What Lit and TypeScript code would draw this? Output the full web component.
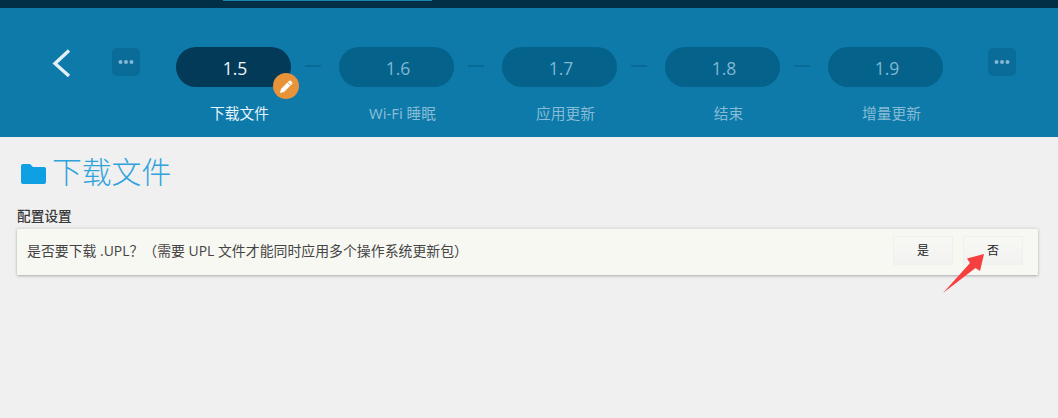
import { LitElement, html, css, svg } from "lit";
import { customElement } from "lit/decorators.js";

const steps = [
  { num: "1.5", label: "下载文件", active: true },
  { num: "1.6", label: "Wi-Fi 睡眠", active: false },
  { num: "1.7", label: "应用更新", active: false },
  { num: "1.8", label: "结束", active: false },
  { num: "1.9", label: "增量更新", active: false },
];

const dots = svg`<svg width="16" height="4" viewBox="0 0 16 4"><circle cx="2.5" cy="2" r="2" /><circle cx="8" cy="2" r="2" /><circle cx="13.5" cy="2" r="2" /></svg>`;

@customElement("app-root")
class AppRoot extends LitElement {
  static styles = css`
    :host {
      display: block;
      position: relative;
      height: 418px;
      overflow: hidden;
      background: #f0f0f0;
      font-family: "Open Sans", "Noto Sans CJK SC", sans-serif;
    }
    .topbar {
      height: 8px;
      background: #022e46;
      padding-left: 223px;
    }
    .topbar div {
      width: 209px;
      height: 1px;
      background: #1d86ad;
    }
    .header {
      height: 129px;
      background: #0d7aa9;
      display: flex;
      align-items: flex-start;
      padding-top: 39px;
      box-sizing: border-box;
    }
    .back {
      margin: 2px 0 0 52px;
      width: 20px;
      height: 30px;
    }
    .more {
      width: 28px;
      height: 28px;
      margin-top: 1px;
      border-radius: 5px;
      background: #0a6c98;
      display: flex;
      align-items: center;
      justify-content: center;
      fill: #86b6d4;
    }
    .more.left {
      margin-left: 40px;
    }
    .more.right {
      margin-left: 45px;
    }
    .steps {
      display: flex;
      margin-left: 36px;
    }
    .step {
      width: 115px;
      display: flex;
      flex-direction: column;
      align-items: center;
    }
    .pill {
      position: relative;
      width: 115px;
      height: 40px;
      box-sizing: border-box;
      padding-left: 3px;
      border-radius: 20px;
      background: #04628b;
      color: #7fb8d3;
      font-size: 17.5px;
      line-height: 42px;
      text-align: center;
    }
    .active .pill {
      background: #033a58;
      color: #f0f6fa;
    }
    .label {
      margin: 9px 0 0 12px;
      font-family: "Noto Sans", "Noto Sans CJK SC", sans-serif;
      font-size: 14.7px;
      line-height: 34px;
      color: #86bcd6;
      white-space: nowrap;
    }
    .active .label {
      color: #e6f3f9;
    }
    .conn {
      width: 16px;
      height: 2px;
      margin: 18px 18px 0 14px;
      background: #0a6a96;
    }
    .edit {
      position: absolute;
      right: -8px;
      top: 26px;
      width: 26px;
      height: 26px;
      border-radius: 50%;
      background: #e8933a;
      display: flex;
      align-items: center;
      justify-content: center;
    }
    .title {
      display: flex;
      align-items: center;
      margin: 16px 0 0 21px;
      height: 34px;
    }
    .title svg {
      margin: 7px 6px 0 0;
    }
    h1 {
      margin: 0;
      font-size: 29.8px;
      font-weight: 300;
      color: #30a3dc;
    }
    h2 {
      margin: 20px 0 0 17px;
      font-size: 13.7px;
      line-height: 17px;
      font-weight: 500;
      color: #3a3a3a;
    }
    .card {
      margin: 4px 20px 0 17px;
      height: 47px;
      box-sizing: border-box;
      padding: 0 15px 4px 10px;
      display: flex;
      align-items: center;
      background: #f8f8f3;
      border-top: 1px solid #e2e2dd;
      box-shadow: 0 1px 3px rgba(0, 0, 0, 0.3);
      border-radius: 1px;
      font-size: 13.9px;
      color: #444;
    }
    .question {
      flex: 1;
      white-space: nowrap;
    }
    .btn {
      width: 60px;
      height: 29px;
      margin-left: 10px;
      box-sizing: border-box;
      border: 1px solid #f0f0ec;
      background: linear-gradient(#f8f8f5, #f2f2f0);
      font-size: 12px;
      line-height: 27px;
      text-align: center;
      color: #222;
    }
    .arrow {
      position: absolute;
      left: 940px;
      top: 250px;
    }
  `;

  render() {
    return html`
      <div class="topbar"><div></div></div>
      <div class="header">
        <svg class="back" viewBox="0 0 20 30">
          <path d="M17 1.5 L3 14.5 L17 27" fill="none" stroke="#e3eef5" stroke-width="3.4" />
        </svg>
        <div class="more left">${dots}</div>
        <div class="steps">
          ${steps.map(
            (s, i) => html`
              ${i > 0 ? html`<div class="conn"></div>` : ""}
              <div class="step ${s.active ? "active" : ""}">
                <div class="pill">
                  ${s.num}
                  ${s.active
                    ? html`<div class="edit">
                        <svg width="15" height="15" viewBox="0 0 15 15">
                          <path d="M1 14 L2 10 L10 2 Q11 1 12 2 L13 3 Q14 4 13 5 L5 13 Z" fill="#fff" />
                          <path d="M8.6 3.4 L11.6 6.4" stroke="#e8933a" stroke-width="1" />
                        </svg>
                      </div>`
                    : ""}
                </div>
                <div class="label">${s.label}</div>
              </div>
            `
          )}
        </div>
        <div class="more right">${dots}</div>
      </div>
      <div class="title">
        <svg width="25" height="20" viewBox="0 0 25 20">
          <path d="M0 2 Q0 0 2 0 H9 L12 3 H23 Q25 3 25 5 V18 Q25 20 23 20 H2 Q0 20 0 18 Z" fill="#0ea0e2" />
        </svg>
        <h1>下载文件</h1>
      </div>
      <h2>配置设置</h2>
      <div class="card">
        <div class="question">是否要下载 .UPL？（需要 UPL 文件才能同时应用多个操作系统更新包）</div>
        <div class="btn">是</div>
        <div class="btn">否</div>
      </div>
      <svg class="arrow" width="48" height="48" viewBox="0 0 48 48">
        <path d="M3 43 L30 13 L27 8.5 L44 4 L40 21 L35.5 18 Z" fill="#f5403f" />
      </svg>
    `;
  }
}
